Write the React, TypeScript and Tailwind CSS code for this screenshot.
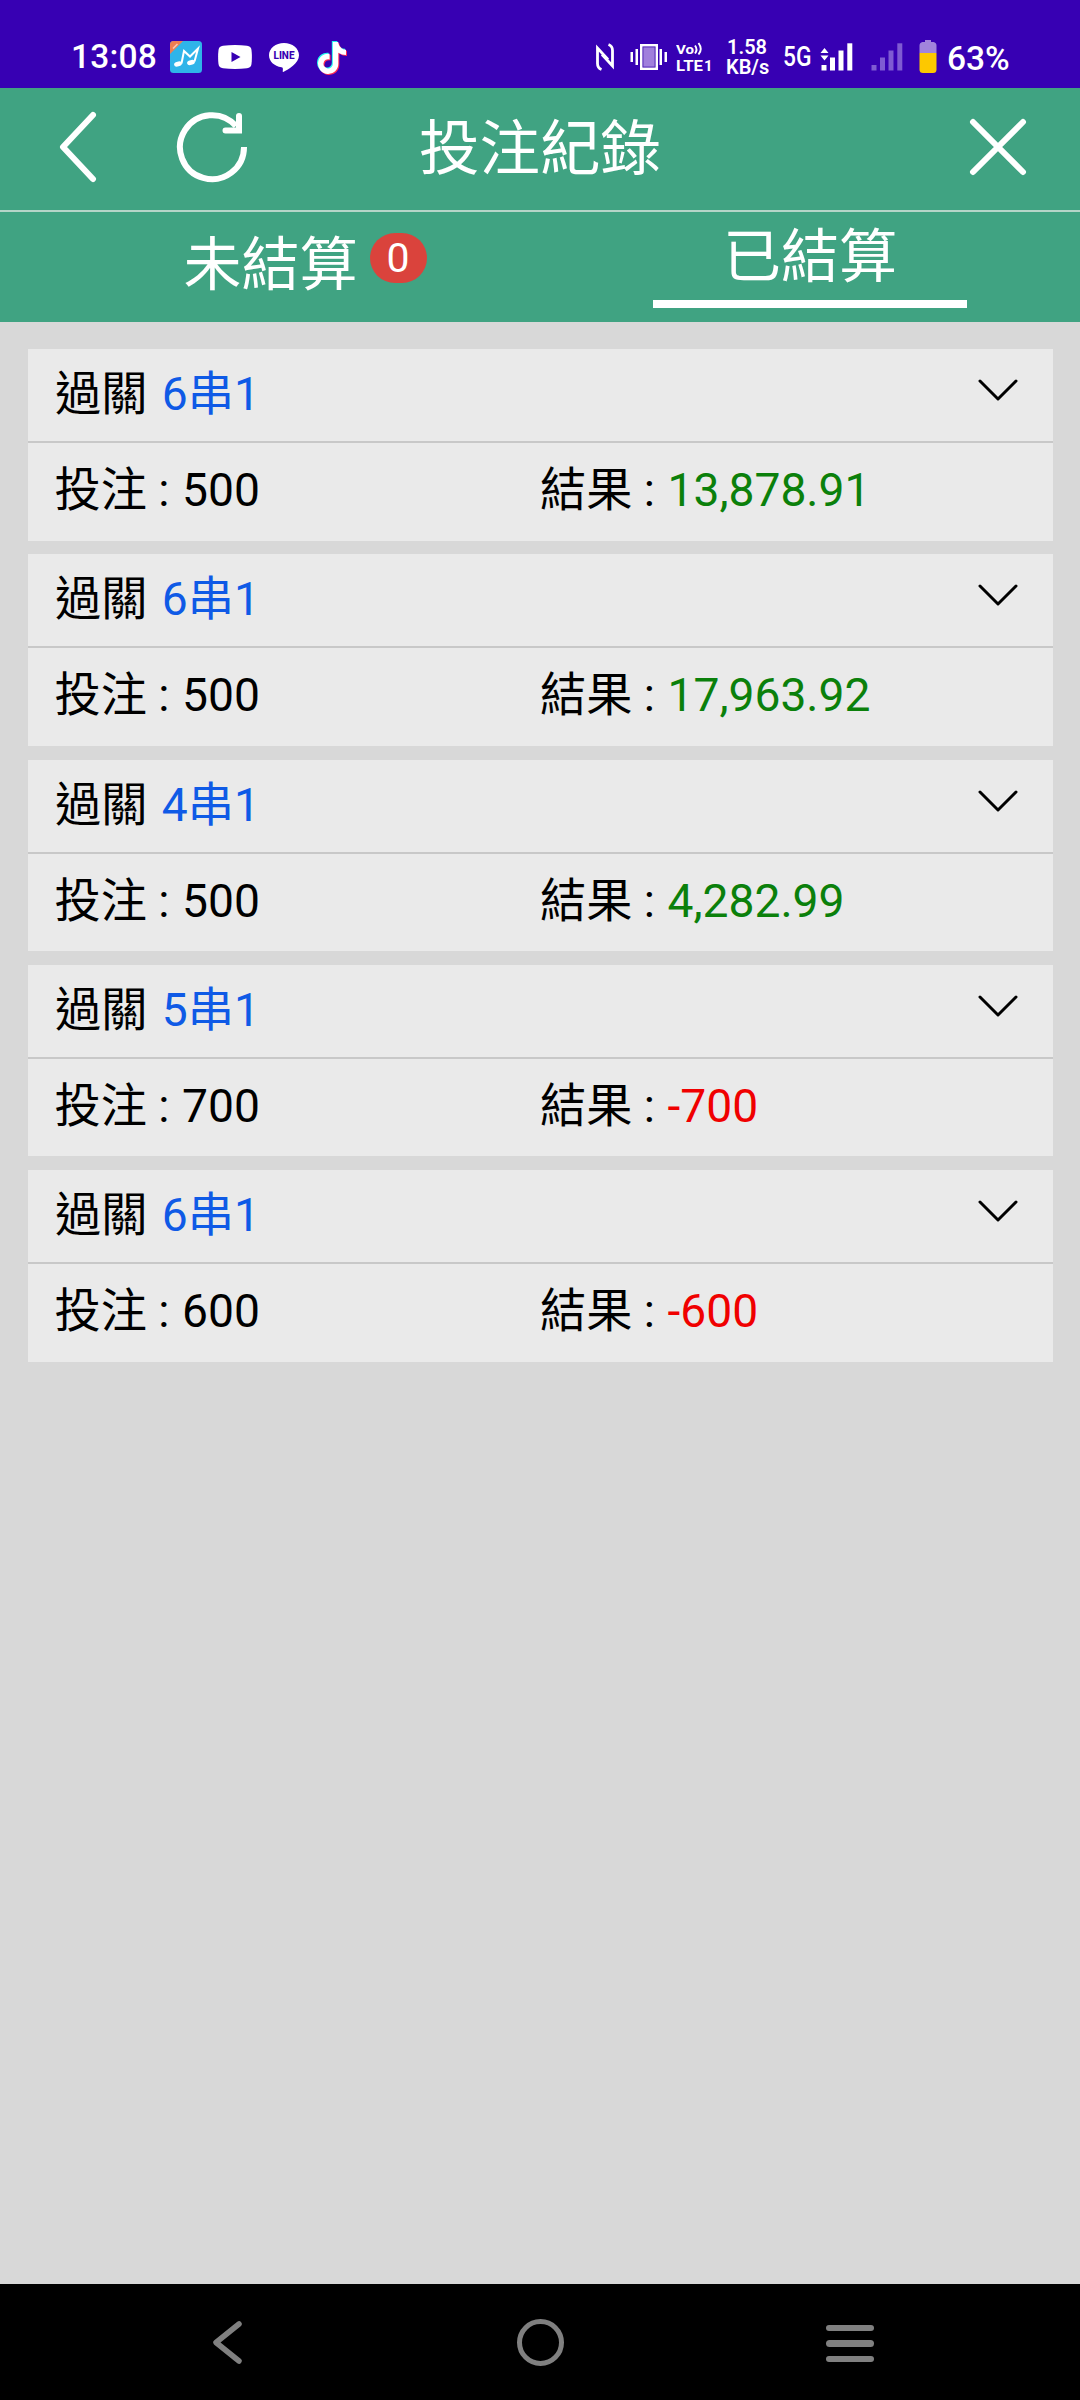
import { useState } from 'react';
import { FaTiktok } from 'react-icons/fa';

type Bet = {
  id: number;
  parlay: string;
  stake: string;
  result: string;
};

const bets: Bet[] = [
  { id: 1, parlay: '6串1', stake: '500', result: '13,878.91' },
  { id: 2, parlay: '6串1', stake: '500', result: '17,963.92' },
  { id: 3, parlay: '4串1', stake: '500', result: '4,282.99' },
  { id: 4, parlay: '5串1', stake: '700', result: '-700' },
  { id: 5, parlay: '6串1', stake: '600', result: '-600' },
];

const MusicIcon = () => (
  <svg width="32" height="32" viewBox="0 0 32 32">
    <rect width="32" height="32" rx="3.5" fill="#2fb4e9" />
    <path d="M3.5 0H13L0 13V3.5A3.5 3.5 0 0 1 3.5 0z" fill="#ee7d52" />
    <path d="M3 7.5 7.5 3" stroke="#f9c9b4" strokeWidth="1.6" />
    <path d="M11.500 22.500 14 10l6 5.500L28 7.500 24.500 20.500" fill="none" stroke="#fff" strokeWidth="2" />
    <ellipse cx="8" cy="23" rx="4" ry="2.400" transform="rotate(-15 8 23)" fill="#fff" />
    <ellipse cx="21" cy="21.500" rx="4" ry="2.400" transform="rotate(-15 21 21.500)" fill="#fff" />
  </svg>
);

const YoutubeIcon = () => (
  <svg width="34" height="24" viewBox="0 0 34 24">
    <path d="M5 .8Q17-.6 29 .8 33 1.300 33.500 5 34.300 12 33.500 19 33 22.700 29 23.200 17 24.600 5 23.200 1 22.700.5 19-.3 12 .5 5 1 1.300 5 .8z" fill="#fff" />
    <path d="M13.500 7v10l9-5z" fill="#3700b3" />
  </svg>
);

const LineIcon = () => (
  <svg width="30" height="29" viewBox="0 0 30 29">
    <path d="M15 0C6.700 0 0 5.400 0 12.200c0 6 5.200 11 12.500 12 1.700.3 1.500 1.500 1.200 4.300 0 .5.400.6.900.3C19 26.500 30 20.500 30 12.200 30 5.400 23.300 0 15 0z" fill="#fff" />
    <text x="15" y="16.300" textAnchor="middle" textLength="21" lengthAdjust="spacingAndGlyphs" fontFamily="Roboto, sans-serif" fontWeight="800" fontSize="11" fill="#3700b3">
      LINE
    </text>
  </svg>
);

const TiktokIcon = () => (
  <div className="relative h-[34px] w-[30px]">
    <FaTiktok className="absolute top-0 left-0 h-[32px] w-[28px] text-[#25f4ee]" />
    <FaTiktok className="absolute top-[2px] left-[2px] h-[32px] w-[28px] text-[#fe2c55]" />
    <FaTiktok className="absolute top-[1px] left-[1px] h-[32px] w-[28px] text-white" />
  </div>
);

const NfcIcon = () => (
  <svg width="18" height="28" viewBox="0 0 18 28" fill="none" stroke="#fff" strokeWidth="2.800">
    <path d="M5.500 26.500Q1.500 25 1.500 20.500V5L12 16.500" />
    <path d="M12.500 1.500Q16.500 3 16.500 7.500V23L6 11.500" />
  </svg>
);

const VibrateIcon = () => (
  <svg width="38" height="26" viewBox="0 0 38 26" fill="#fff">
    <rect x="0.500" y="8" width="2.500" height="10" />
    <rect x="5.500" y="5" width="2.500" height="16" />
    <rect x="11.200" y="1.200" width="15.600" height="23.600" fill="#a07fdc" stroke="#fff" strokeWidth="2.400" />
    <rect x="13" y="3" width="12" height="20" fill="none" stroke="#4a20b4" strokeWidth="0.800" />
    <rect x="29.500" y="5" width="2.500" height="16" />
    <rect x="34.500" y="8" width="2.500" height="10" />
  </svg>
);

const VolteIcon = () => (
  <svg width="38" height="36" viewBox="0 -2 38 36" fill="#fff" fontFamily="Roboto, sans-serif" fontWeight="700">
    <text x="0" y="11.500" fontSize="13.500" textLength="18" lengthAdjust="spacingAndGlyphs">Vo</text>
    <path d="M19 3.500q3 4 0 8M22.500 1q4.500 6 0 11.500" fill="none" stroke="#fff" strokeWidth="1.900" />
    <text x="0" y="28.500" fontSize="15.500" textLength="27" lengthAdjust="spacingAndGlyphs">LTE</text>
    <text x="28" y="28.500" fontSize="15">1</text>
  </svg>
);

const SignalIcon = ({ active }: { active?: boolean }) => (
  <svg className="overflow-visible" width="32" height="28" viewBox="0 0 32 28" fill={active ? '#fff' : '#7f5bd2'}>
    {active && <path d="M3.500 5 7.500 10h-8zM3.500 17.500-.5 12.500h8z" />}
    <rect x="0.500" y="22" width="5" height="5.500" />
    <rect x="9" y="14.500" width="5" height="13" />
    <rect x="17.500" y="7.500" width="5" height="20" />
    <rect x="26.300" y="0.300" width="5" height="27.200" />
  </svg>
);

const BatteryIcon = () => (
  <svg width="18" height="34" viewBox="0 0 18 34">
    <path d="M6 0h6v2h2.500q3 .5 3 3.500V13H.500V5.500Q.500 2.500 3.500 2H6z" fill="#a184dc" />
    <path d="M.500 13h17v16.500q0 3.500-3.500 3.500H4Q.500 33 .500 29.500z" fill="#fdc800" />
  </svg>
);

function StatusBar() {
  return (
    <div className="flex h-[88px] items-center bg-[#3700b3] pt-[26px] pl-[71px] font-medium text-white">
      <div className="flex h-[62px] items-start">
        <div className="w-[99px] text-[33.500px] leading-[34px] tracking-[0.200px]">
          <span className="block pt-[14px]">13:08</span>
        </div>
        <div className="mt-[15px] mr-4"><MusicIcon /></div>
        <div className="mt-[19px] mr-[17px]"><YoutubeIcon /></div>
        <div className="mt-[17px] mr-[18px]"><LineIcon /></div>
        <div className="mt-[15px] mr-[249px]"><TiktokIcon /></div>
        <div className="mt-[17px] mr-4"><NfcIcon /></div>
        <div className="mt-[18px] mr-2"><VibrateIcon /></div>
        <div className="mt-[14px] mr-[12px]"><VolteIcon /></div>
        <div className="mt-[11px] mr-[15px] w-[42px] text-center text-[20px] leading-[20px] font-semibold whitespace-nowrap">
          <p>1.58</p>
          <p>KB/s</p>
        </div>
        <div className="mt-[14px] mr-[7px] w-[31px] text-[28.500px] leading-[34px]">
          <span className="inline-block origin-left scale-x-[0.800]">5G</span>
        </div>
        <div className="mt-[17px] mr-[18px]"><SignalIcon active /></div>
        <div className="mt-[17px] mr-4"><SignalIcon /></div>
        <div className="mt-[14px] mr-[10px]"><BatteryIcon /></div>
        <div className="pt-[16px] text-[33.500px] leading-[34px]">63%</div>
      </div>
    </div>
  );
}

function Header() {
  return (
    <header className="flex h-[124px] items-center justify-between border-b-2 border-[#b5d5c8] pr-[52px] pb-[4px] pl-[58px]">
      <div className="flex w-[300px] items-center">
        <button className="mr-[76px]">
          <svg width="40" height="72" viewBox="0 0 40 72" fill="none" stroke="#fff" strokeWidth="6" strokeLinecap="round" strokeLinejoin="round">
            <path d="M35 4 5 36l30 32" />
          </svg>
        </button>
        <button>
          <svg width="74" height="74" viewBox="0 0 74 74" fill="none" stroke="#fff" strokeWidth="6">
            <path d="M70 37A32 32 0 1 1 62 16" />
            <path d="M65 6v14.500H51.500" strokeLinecap="round" strokeLinejoin="miter" />
          </svg>
        </button>
      </div>
      <h1 className="pt-[5px] text-[60.500px] leading-[80px]">投注紀錄</h1>
      <button className="flex w-[306px] justify-end">
        <svg width="60" height="60" viewBox="0 0 60 60" stroke="#fff" strokeWidth="6" strokeLinecap="round">
          <path d="M5 5l50 50M55 5 5 55" />
        </svg>
      </button>
    </header>
  );
}

function BetCard({ bet }: { bet: Bet }) {
  const lost = bet.result.startsWith('-');

  return (
    <div className="h-[191.500px] bg-[#eaeaea] text-[46.200px] leading-[54px]">
      <div className="flex h-[94px] items-start justify-between border-b-2 border-[#c8c8c8] pt-[17px] pr-[34px] pl-[27.500px]">
        <p className="pt-px">
          過關 <span className="ml-[3px] text-[#0f5ae6]">{bet.parlay}</span>
        </p>
        <svg className="mt-[12px]" width="42" height="24" viewBox="0 0 42 24" fill="none" stroke="#000" strokeWidth="3" strokeLinecap="round" strokeLinejoin="round">
          <path d="M3 3l18 18L39 3" />
        </svg>
      </div>
      <div className="grid grid-cols-2 px-[27px] pt-[20px]">
        <p>
          投注 : <span className="ml-px">{bet.stake}</span>
        </p>
        <p>
          結果 : <span className={lost ? 'ml-px text-[#f00000]' : 'ml-px text-[#0b800b]'}>{bet.result}</span>
        </p>
      </div>
    </div>
  );
}

export default function App() {
  const [tab, setTab] = useState('settled');

  return (
    <div className="flex h-[2400px] w-[1080px] flex-col overflow-hidden bg-[#d8d8d8] font-[Roboto,'Noto_Sans_CJK_TC',sans-serif] text-black">
      <StatusBar />
      <div className="bg-[#40a382] text-white">
        <Header />
        <nav className="grid h-[110px] grid-cols-2 text-[58px] leading-[70px]">
          <button className="flex items-start justify-center pt-[15px] pl-[70px]" onClick={() => setTab('open')}>
            <span className="mt-[3px]">未結算</span>
            <span className="mt-[6px] ml-[12px] h-[50px] w-[57px] rounded-[25px] bg-[#da433c] text-[41px] leading-[50px]">0</span>
          </button>
          <button className="flex justify-center" onClick={() => setTab('settled')}>
            <span className={`h-[96px] w-[314px] pt-[10px] ${tab === 'settled' ? 'border-b-8 border-white' : ''}`}>已結算</span>
          </button>
        </nav>
      </div>

      <main className="flex grow flex-col gap-[13.750px] px-[27.500px] pt-[27px]">
        {bets.map((bet) => (
          <BetCard key={bet.id} bet={bet} />
        ))}
      </main>

      <footer className="flex h-[116px] items-center bg-black pl-[211px]">
        <svg className="mr-[272px]" width="34" height="48" viewBox="0 0 34 48" fill="none" stroke="#808080" strokeWidth="5.500" strokeLinecap="round" strokeLinejoin="round">
          <path d="M28 6 5 24.500l23 18.500" />
        </svg>
        <div className="mr-[262px] h-[47px] w-[47px] rounded-full border-[5.500px] border-[#808080]" />
        <div className="mt-[3px] flex flex-col gap-[9px]">
          <div className="h-[6.500px] w-12 rounded-sm bg-[#808080]" />
          <div className="h-[6.500px] w-12 rounded-sm bg-[#808080]" />
          <div className="h-[6.500px] w-12 rounded-sm bg-[#808080]" />
        </div>
      </footer>
    </div>
  );
}
